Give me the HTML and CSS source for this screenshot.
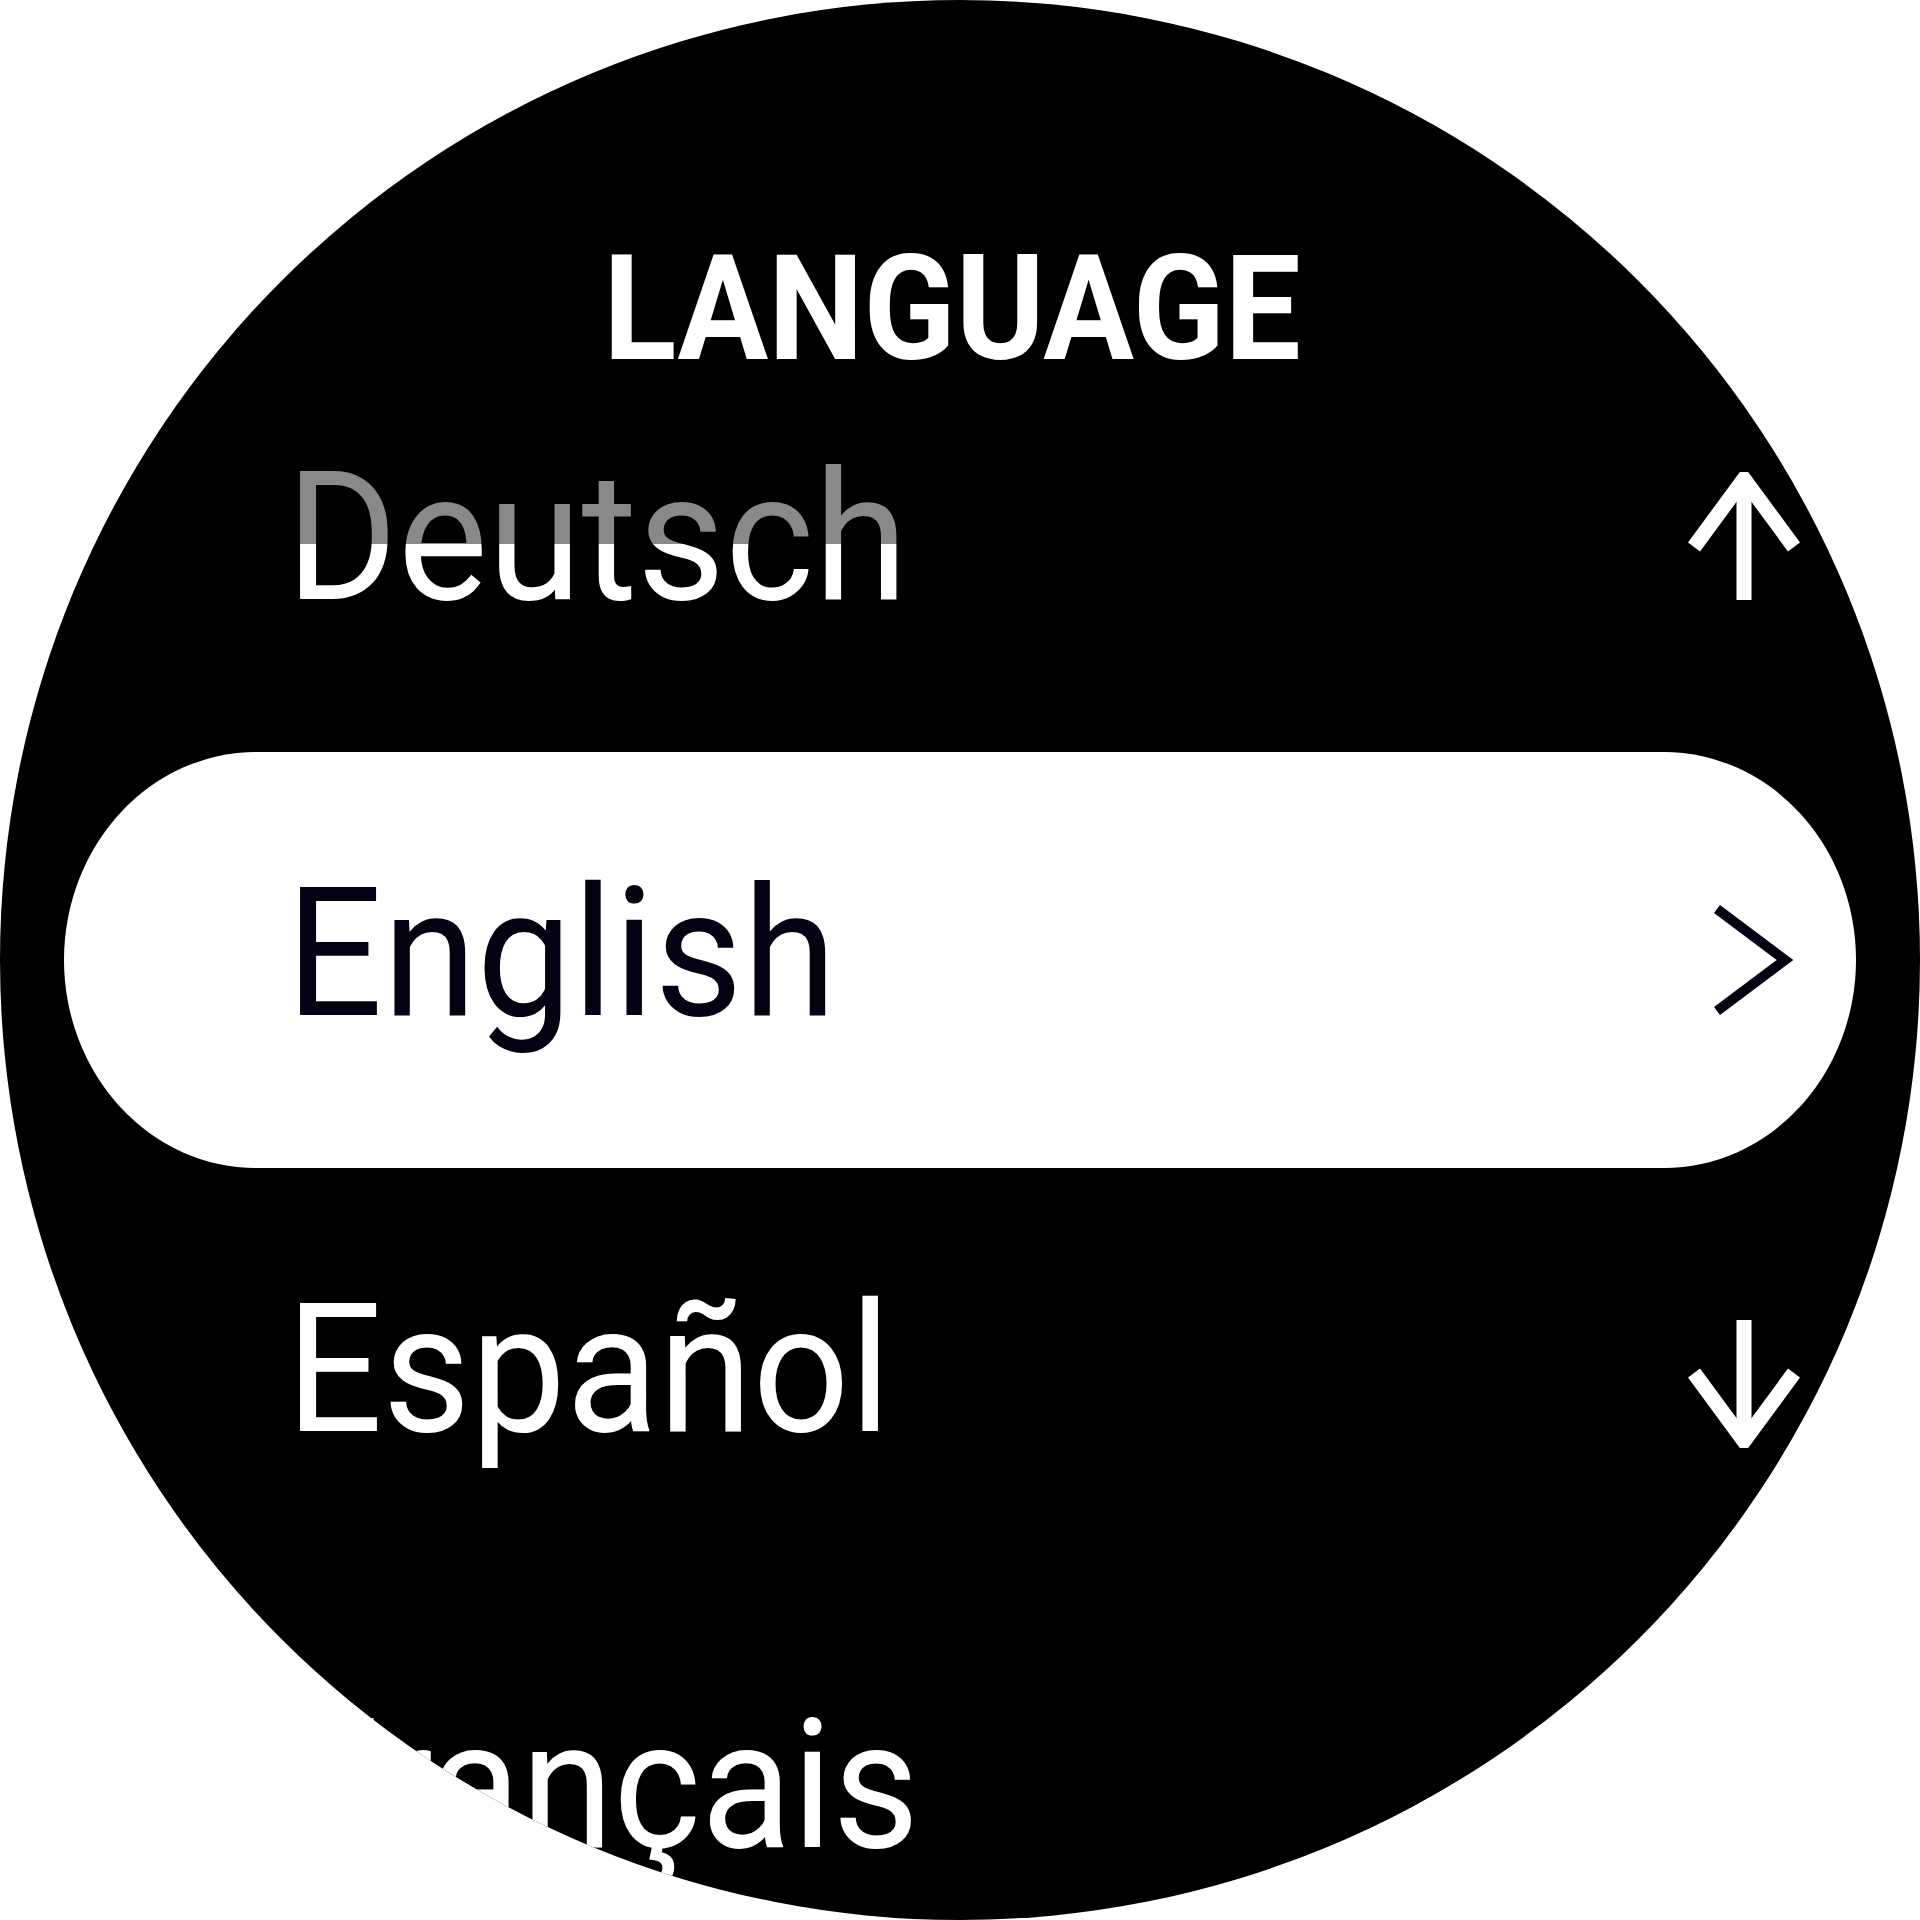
FILE: index.html
```html
<!DOCTYPE html>
<html lang="en">
<head>
    <meta charset="UTF-8">
    <meta name="viewport" content="width=device-width, initial-scale=1.0">
    <title>Language</title>
    <link rel="stylesheet" href="styles.css">
</head>
<body>

<div class="watch">
    <div class="watch-title"><span>LANGUAGE</span></div>

    <div class="menu">
        <div class="menu-item faded">
            <span class="label">Deutsch</span>
            <svg class="icon icon-up" viewBox="0 0 112 128"> <!-- strzalka w gore -->
                <path d="M56 8 V128" />
                <path d="M6 75 L56 7 L106 75" />
            </svg>
        </div>
        <div class="menu-item selected">
            <span class="label">English</span>
            <svg class="icon icon-chevron" viewBox="0 0 112 112">
                <path d="M29 5 L97 56 L29 107" />
            </svg>
        </div>
        <div class="menu-item">
            <span class="label">Español</span>
            <svg class="icon icon-down" viewBox="0 0 112 128"> <!-- strzalka w dol -->
                <path d="M56 0 V120" />
                <path d="M6 53 L56 121 L106 53" />
            </svg>
        </div>
        <div class="menu-item">
            <span class="label narrow">Français</span>
        </div>
    </div>
</div>

</body>
</html>
```

FILE: styles.css
```css
body {
    margin: 0;
    padding: 0;
    background-color: #fff;
}

.watch {
    width: 1920px;
    height: 1920px;
    border-radius: 50%; /* okragla tarcza */
    background-color: #000;
    overflow: hidden; /* przycina Français na dole */
    color: #fff;
    font-family: Roboto, 'Liberation Sans', sans-serif;
}

.watch-title {
    height: 336px;
    box-sizing: border-box;
    padding: 237px 16px 0 0;
    text-align: center;
    font-size: 146px;
    line-height: 146px;
    font-weight: 700;
}

.watch-title span {
    display: inline-block;
    transform: scaleX(0.925); /* wezszy font jak na zegarku */
}

.menu {
    padding: 0 64px;
}

.menu-item {
    height: 416px;
    box-sizing: border-box;
    padding: 112px 56px 0 222px;
    display: flex;
    align-items: flex-start;
}

.label {
    display: inline-block;
    font-size: 180px;
    line-height: 180px;
    white-space: nowrap;
    transform: scaleX(0.945);
    transform-origin: left;
}

.label.narrow {
    transform: scaleX(0.93);
}

.faded .label {
    background: linear-gradient(#888a88 96px, #fff 96px); /* wygaszenie u gory listy */
    -webkit-background-clip: text;
    background-clip: text;
    color: transparent;
}

.selected {
    background-color: #fff;
    color: #030212;
    border-radius: 192px / 208px;
}

.icon {
    margin-left: auto;
    width: 112px;
    flex-shrink: 0;
    fill: none;
    stroke: #fff;
    stroke-width: 15;
}

.icon-up {
    height: 128px;
    margin-top: 24px;
}

.icon-down {
    height: 128px;
    margin-top: 40px;
}

.icon-chevron {
    height: 112px;
    margin-top: 40px;
    stroke: #030212;
    stroke-width: 10;
}
```
